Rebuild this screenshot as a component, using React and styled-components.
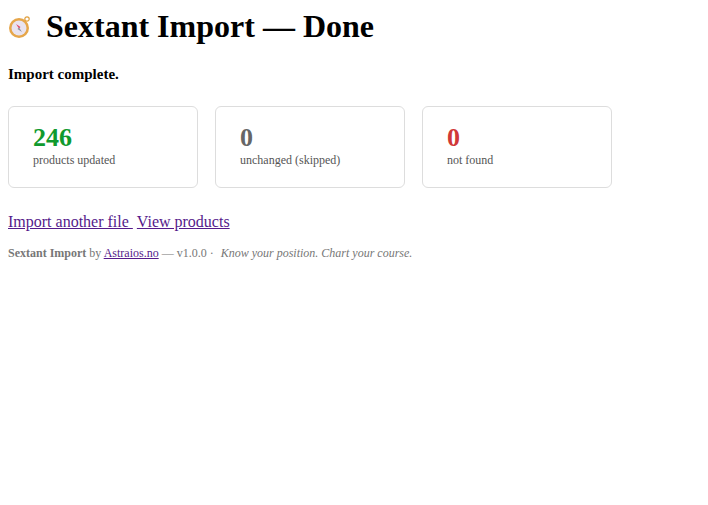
import React from 'react';
import styled, { createGlobalStyle } from 'styled-components';

const Global = createGlobalStyle`
  body { margin: 8px; font-family: "Liberation Serif", "Times New Roman", serif; color: #000; background: #fff; }
`;

const Title = styled.h1`
  margin: 0;
  font-size: 32px;
  line-height: 37px;
  display: flex;
  align-items: center;
  gap: 14px;
`;

const Lead = styled.p`
  margin: 20px 0 0;
  font-size: 15px;
  font-weight: bold;
  line-height: 18px;
`;

const Cards = styled.div`
  display: flex;
  gap: 17px;
  margin-top: 23px;
`;

const Card = styled.div`
  width: 190px;
  height: 82px;
  box-sizing: border-box;
  border: 1px solid #ddd;
  border-radius: 6px;
  padding: 16px 24px;
`;

const Num = styled.div`
  font-size: 26px;
  font-weight: bold;
  line-height: 30px;
  color: ${p => p.color};
`;

const Label = styled.div`
  font-size: 12px;
  color: #555;
  line-height: 14px;
`;

const Links = styled.div`
  margin-top: 24px;
  font-size: 16px;
  line-height: 20px;
  a { color: #551a8b; margin-right: 4px; }
`;

const Footer = styled.p`
  margin: 14px 0 0;
  font-size: 12px;
  color: #777;
  a { color: #551a8b; }
  b { color: #777; }
  i { margin-left: 4px; }
`;

const Compass = () => (
  <svg width="24" height="24" viewBox="0 0 24 24">
    <circle cx="19" cy="4" r="2.2" fill="none" stroke="#e0a040" strokeWidth="1.2" />
    <circle cx="11" cy="13" r="10" fill="#e6a64a" />
    <circle cx="11" cy="13" r="7.5" fill="#e9e3ef" />
    <polygon points="8,9 12.5,12 11,13.5" fill="#e0466a" />
    <polygon points="14,17 9.5,14 11,12.5" fill="#8a8f9a" />
  </svg>
);

export default function App() {
  return (
    <>
      <Global />
      <Title><Compass />Sextant Import — Done</Title>
      <Lead>Import complete.</Lead>
      <Cards>
        <Card><Num color="#109a2e">246</Num><Label>products updated</Label></Card>
        <Card><Num color="#666">0</Num><Label>unchanged (skipped)</Label></Card>
        <Card><Num color="#d03838">0</Num><Label>not found</Label></Card>
      </Cards>
      <Links>
        <a href="#">Import another file </a>
        <a href="#">View products</a>
      </Links>
      <Footer>
        <b>Sextant Import</b> by <a href="#">Astraios.no</a> — v1.0.0 · <i>Know your position. Chart your course.</i>
      </Footer>
    </>
  );
}
